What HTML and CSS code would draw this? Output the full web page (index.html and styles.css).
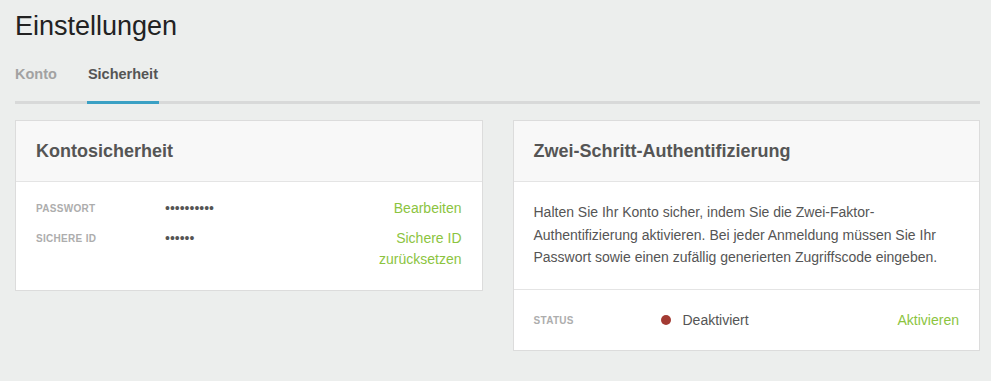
FILE: index.html
```html
<!DOCTYPE html>
<html lang="de">
<head>
<meta charset="utf-8">
<title>Einstellungen</title>
<link rel="stylesheet" href="styles.css">
</head>
<body>
<div class="page">
  <h1 class="title">Einstellungen</h1>
  <nav class="tabs">
    <a class="tab">Konto</a>
    <a class="tab active">Sicherheit</a>
  </nav>
  <div class="cards">
    <section class="card">
      <header class="card-head"><h2>Kontosicherheit</h2></header>
      <div class="card-body rows">
        <div class="row">
          <span class="label">Passwort</span>
          <span class="value dots">••••••••••</span>
          <a class="action">Bearbeiten</a>
        </div>
        <div class="row">
          <span class="label">Sichere ID</span>
          <span class="value dots">••••••</span>
          <a class="action">Sichere ID<br>zurücksetzen</a>
        </div>
      </div>
    </section>
    <section class="card">
      <header class="card-head"><h2>Zwei-Schritt-Authentifizierung</h2></header>
      <div class="card-body">
        <p class="desc">Halten Sie Ihr Konto sicher, indem Sie die Zwei-Faktor-Authentifizierung aktivieren. Bei jeder Anmeldung müssen Sie Ihr Passwort sowie einen zufällig generierten Zugriffscode eingeben.</p>
      </div>
      <div class="card-foot">
        <div class="row status-row">
          <span class="label">Status</span>
          <span class="value status"><span class="dot"></span>Deaktiviert</span>
          <a class="action">Aktivieren</a>
        </div>
      </div>
    </section>
  </div>
</div>
</body>
</html>
```

FILE: styles.css
```css
* { box-sizing: border-box; }
html, body { margin: 0; padding: 0; }
body {
  background: #eceeed;
  font-family: "Liberation Sans", Arial, sans-serif;
  color: #555;
}
.page { padding: 11px 11px 0 15px; }
.title {
  margin: 0;
  font-size: 27px;
  font-weight: normal;
  line-height: 31px;
  color: #222;
}
.tabs {
  margin-top: 22px;
  display: flex;
  gap: 30px;
  border-bottom: 3px solid #d8d9d9;
}
.tab {
  font-size: 14.5px;
  font-weight: bold;
  line-height: 20px;
  padding: 0 0 17px;
  margin-bottom: -3px;
  border-bottom: 3px solid transparent;
  color: #a2a2a2;
}
.tab.active {
  color: #555;
  border-bottom-color: #3aa0c4;
  padding-left: 1px;
  padding-right: 1px;
}
.cards {
  margin-top: 16px;
  display: grid;
  grid-template-columns: 1fr 1fr;
  gap: 30px;
  align-items: start;
}
.card {
  background: #fff;
  border: 1px solid #dcdcdc;
}
.card-head {
  background: #f8f8f8;
  border-bottom: 1px solid #e4e4e4;
  padding: 20px 20px 19px;
}
.card-head h2 {
  margin: 0;
  font-size: 18px;
  line-height: 21px;
  font-weight: bold;
  color: #555;
}
.card-body { padding: 16px 20px 20px; }
.rows { display: flex; flex-direction: column; gap: 9px; }
.row {
  display: flex;
  align-items: flex-start;
  font-size: 14px;
  line-height: 21px;
}
.label {
  width: 129px;
  flex: none;
  font-size: 10px;
  font-weight: bold;
  letter-spacing: 0.3px;
  text-transform: uppercase;
  color: #adadad;
}
.value { flex: 1; color: #555; }
.dots { font-size: 14px; }
.action {
  text-align: right;
  color: #8cc43f;
}
.desc {
  margin: 3px 0 0;
  font-size: 14px;
  line-height: 22.5px;
  color: #555;
}
.card-foot {
  border-top: 1px solid #e4e4e4;
  padding: 20px 20px 19px;
}
.status-row { align-items: center; }
.status-row .label { width: 127px; }
.status { display: flex; align-items: center; gap: 12px; }
.dot {
  width: 10px;
  height: 10px;
  border-radius: 50%;
  background: #a33b33;
  flex: none;
}
```
